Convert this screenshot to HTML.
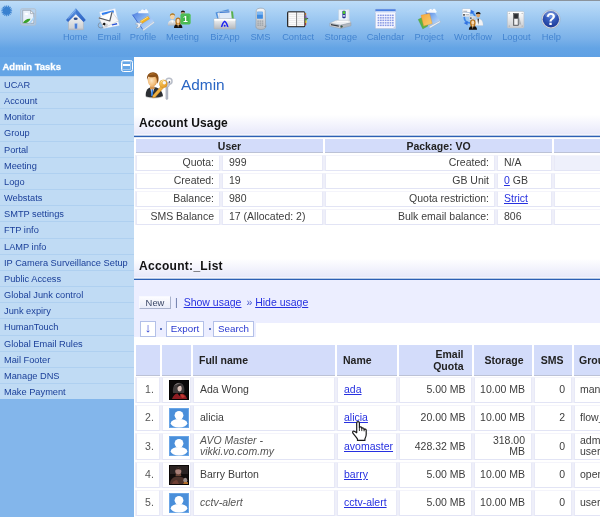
<!DOCTYPE html>
<html><head><meta charset="utf-8"><title>Admin</title>
<style>
html,body{margin:0;padding:0;}
body{will-change:transform;width:600px;height:517px;overflow:hidden;background:#fff;font-family:"Liberation Sans",Arial,sans-serif;position:relative;font-size:10.5px;color:#333;}
*{box-sizing:border-box;}
#hdr{position:absolute;left:0;top:0;width:600px;height:57px;background:linear-gradient(#bcdcf8 0px,#a7cff4 12px,#7ab1e9 38px,#64a4e5 47px,#5fa0e4 57px);border-top:1px solid #8a939c;}
.nav{position:absolute;top:31px;font-size:9.3px;color:#4384d0;text-align:center;width:60px;margin-left:-30px;white-space:nowrap;}
.ico{position:absolute;top:6px;width:26px;height:26px;margin-left:-13px;}
#side{position:absolute;left:0;top:57px;width:134px;height:460px;background:#83b6eb;}
#side h3{margin:0;height:19px;background:#64a5e6;color:#fff;font-size:9.5px;font-weight:bold;line-height:20px;padding-left:2.5px;position:relative;-webkit-text-stroke:0.3px #fff;}
#side a{position:absolute;left:0;width:134px;display:block;line-height:16.5px;font-size:9.25px;color:#1a3f99;background:#c0dbf4;border-top:1px solid #afd0f0;padding-left:4px;white-space:nowrap;text-decoration:none;}
.min{position:absolute;left:120.500px;top:2.500px;width:12px;height:12px;border:1.300px solid #fff;border-radius:2.500px;background:#64a5e6;}
.min i{position:absolute;left:0.800px;top:0.800px;right:0.800px;bottom:0.800px;border:1px solid rgba(255,255,255,.38);}
.min b{position:absolute;left:1.200px;top:3.500px;width:7.200px;height:2.400px;background:#fff;}
.sec{position:absolute;left:134px;width:466px;font-weight:bold;font-size:12px;color:#111;padding-left:5px;background:linear-gradient(#fff 0,#fff 25%,#e8e9fa 96%,#f4f4fd 96%,#f4f4fd 100%);letter-spacing:0.12px;}
a.l{color:#2630e0;text-decoration:underline;}
.c{position:absolute;background:#fff;border:1px solid;border-color:#f4f4fb #e8e9f7 #e2e4f5 #e8e9f7;box-shadow:1px 0 0 #eeeff9,-1px 0 0 #eeeff9;font-size:10.5px;color:#3d3d3d;white-space:nowrap;overflow:hidden;}
.h{position:absolute;background:#d3dcfa;border-bottom:1px solid #bcc2d6;font-size:10.5px;font-weight:bold;color:#222;white-space:nowrap;overflow:hidden;}
.r{text-align:right;}
.btn{position:absolute;border:1px solid #b3c0e8;background:#fff;color:#2838d0;font-size:9.8px;text-align:center;}
#title{position:absolute;left:181px;top:75px;font-size:15.4px;color:#2a66c4;line-height:20px;}
.bl{position:absolute;left:134px;width:466px;height:3px;background:linear-gradient(rgba(44,96,180,.35) 0,rgba(44,96,180,.35) 1px,#2c60b4 1px,#2c60b4 2px,rgba(44,96,180,.15) 2px);}
#band{position:absolute;left:134px;top:280px;width:466px;height:43px;background:#eceeff;}
#links{position:absolute;left:175px;top:295px;font-size:10.5px;line-height:14px;color:#446;white-space:nowrap;}
.dot{position:absolute;width:2px;height:2px;background:#2f4aa8;border-radius:1px;}
.av{position:absolute;left:6px;width:20px;height:20px;}
#band2{position:absolute;left:134px;top:323px;width:122px;height:14px;background:#eceeff;}
</style></head><body>
<div id="hdr">
<svg id="ics" width="600" height="57" viewBox="0 0 600 57" style="position:absolute;left:0;top:-1px">
<defs>
<linearGradient id="gRoof" x1="0" y1="0" x2="0" y2="1"><stop offset="0" stop-color="#6aa3ea"/><stop offset="1" stop-color="#2d63c4"/></linearGradient>
<linearGradient id="gWall" x1="0" y1="0" x2="0" y2="1"><stop offset="0" stop-color="#ffffff"/><stop offset="1" stop-color="#c9ccd0"/></linearGradient>
<linearGradient id="gBook" x1="0" y1="0" x2="1" y2="1"><stop offset="0" stop-color="#4474dc"/><stop offset="0.500" stop-color="#8ab6f1"/><stop offset="1" stop-color="#cfe4fb"/></linearGradient>
<linearGradient id="gSil" x1="0" y1="0" x2="0" y2="1"><stop offset="0" stop-color="#f6f7f8"/><stop offset="1" stop-color="#b4b8bd"/></linearGradient>
<radialGradient id="gHelp" cx="0.5" cy="0.3" r="0.8"><stop offset="0" stop-color="#4a78dc"/><stop offset="1" stop-color="#152f8c"/></radialGradient>
<linearGradient id="gOr" x1="0" y1="0" x2="1" y2="1"><stop offset="0" stop-color="#f6a63a"/><stop offset="1" stop-color="#f7cf72"/></linearGradient>
</defs>
<!-- sunburst -->
<g fill="#3b82d0"><circle cx="6.700" cy="10.800" r="3.900"/>
<g stroke="#3b82d0" stroke-width="1.100">
<line x1="1.300" y1="10.800" x2="12.100" y2="10.800"/><line x1="6.700" y1="5.400" x2="6.700" y2="16.200"/>
<line x1="2.900" y1="7" x2="10.500" y2="14.600"/><line x1="2.900" y1="14.600" x2="10.500" y2="7"/>
<line x1="1.700" y1="8.700" x2="11.700" y2="12.900"/><line x1="1.700" y1="12.900" x2="11.700" y2="8.700"/>
<line x1="4.600" y1="5.800" x2="8.800" y2="15.800"/><line x1="8.800" y1="5.800" x2="4.600" y2="15.800"/>
</g></g>
<!-- broken image -->
<rect x="20.700" y="8.800" width="15" height="16.300" rx="1.500" fill="#c3d6ea" fill-opacity="0.550" stroke="#b4c0cc" stroke-width="1"/>
<path d="M22.700 10.300h7.800l3.300 3.300v9.700h-11.100z" fill="#e9f1fb" stroke="#8d98a6" stroke-width="0.700"/>
<path d="M30.500 10.300v3.300h3.300z" fill="#f8f8f8" stroke="#8d98a6" stroke-width="0.600"/>
<path d="M23 23c1.200-3 4.500-4.800 7.500-4.200c-0.500 2-3 4.200-4.500 4.200z" fill="#3aa12a"/>
<path d="M34 16.500l-5.500 7h2l3.500-4.500z" fill="#a9d3f7"/>
<ellipse cx="26.500" cy="14" rx="2" ry="0.900" fill="#fff"/>
<!-- home -->
<g>
<path d="M68.500 19.500l7.300-7.500l7.600 7.500v10.100h-14.900z" fill="url(#gWall)" stroke="#a9adb3" stroke-width="0.500"/>
<path d="M75.800 8.300l9.900 11.800l-2.100 1.900l-7.800-7.800l-7.700 7.800l-2.100-1.900z" fill="url(#gRoof)"/>
<path d="M75.800 8.300l9.900 11.800l-2.100 1.900l-7.800-9.500z" fill="#2a5fc0" fill-opacity="0.450"/>
<path d="M75.800 9.600l-7.600 9" stroke="#9cc4f5" stroke-width="0.700" fill="none"/>
<rect x="74.300" y="23.200" width="3.200" height="6.300" fill="#4a7fd8" stroke="#d5def0" stroke-width="0.500"/>
<ellipse cx="75.700" cy="18.800" rx="2" ry="1.200" fill="#2c4a86"/>
<rect x="68.600" y="28.600" width="14.700" height="1" fill="#b9bcc2"/>
</g>
<!-- email -->
<g>
<path d="M99.500 12.100l15.700-3.500l4.100 16.900l-15.700 2.900z" fill="#fcfdff" stroke="#c3d2ea" stroke-width="0.400"/>
<path d="M101.600 12.900l11.900-2.600l0.500 2.300l-11.800 2.500z" fill="#2f7df0"/>
<path d="M111.700 24.300l5.300-1.200l0.300 1.300l-5.300 1.200z" fill="#2a55d8"/>
<circle cx="100.900" cy="25.300" r="2.700" fill="none" stroke="#7a838e" stroke-width="0.700"/>
<path d="M98.700 17.700l13.300-5.900l6.800 9l-15.100 7.300z" fill="#f6f6f7" stroke="#b4b8bf" stroke-width="0.500"/>
<path d="M98.900 17.800l10.900 3.200l2.200-8.900" fill="#fff" stroke="#5a5d63" stroke-width="1.200" stroke-linejoin="round"/>
<path d="M102.300 24.300l1.800-1.700l1.600 1.100l-0.600 2z" fill="#0c0c0c"/>
<path d="M104 26.500l2.500-3l1.500 0.500l-1 3.500z" fill="#c9ccd1"/>
</g>
<!-- profile -->
<g>
<path d="M132.400 14.700l12.700-5.500l8.700 12.200l-11 8.100z" fill="url(#gBook)"/>
<path d="M132.400 14.700l10.400 14.800" stroke="#3a66d0" stroke-width="0.900"/>
<path d="M142.800 29.500l11-8.100l0.600 1.300l-10.900 8z" fill="#e4e9f0" stroke="#aab6c6" stroke-width="0.300"/>
<path d="M138.300 13.200c-0.400-1.500 1-2.600 2.300-2c0.300-1.700 2.600-2.300 3.600-0.900c0.800-1.500 3.200-1.200 3.400 0.600c1.300 0.400 1 2.300-0.300 2.400z" fill="#fff" fill-opacity="0.920"/>
<path d="M140 21.300l8-5l1.500 2.500l-8 5z" fill="#f5b41c" stroke="#d98c10" stroke-width="0.400"/>
<path d="M140.600 21.500l7.600-4.700" stroke="#fdeaa0" stroke-width="0.800"/>
<path d="M141 22.300l-1.300 1c-1.200-0.900-3.200-0.600-4.300 0.700l2.300 0.700l0.300 1.700l-2 1.300c1.400 0.800 3.300 0.300 4.100-1.100c0.400-0.700 0.500-1.400 0.400-2l1.700-1.100z" fill="#f2f4f7" stroke="#9099a5" stroke-width="0.500"/>
</g>
<!-- meeting -->
<g>
<circle cx="182.900" cy="12.800" r="1.900" fill="#c49a70"/><path d="M180.800 12.600c0-2.900 4.300-2.900 4.300 0c-1.100-0.800-3.200-0.800-4.300 0z" fill="#1a120c"/>
<path d="M167.800 25.600c0-3.800 1.600-5.300 4.300-5.300s4.300 1.500 4.300 5.300z" fill="url(#gSil)"/>
<path d="M171.400 20.400l0.900 2.800l0.900-2.800z" fill="#fff"/>
<ellipse cx="172.300" cy="16.500" rx="2.200" ry="2.900" fill="#f6d3a4"/>
<path d="M169.900 16.400c-0.600-4 5.600-4.500 5.200-0.300c-0.900-1.400-3.800-2-5.200 0.300z" fill="#a9741c"/>
<path d="M174 28c0-3 1.800-4.300 4.200-4.300s4.200 1.300 4.200 4.300z" fill="#15110e"/>
<path d="M175.400 20.800c0-4.300 5.400-4.300 5.400 0c0 1.800-0.400 3.300-0.700 4.100h-4c-0.300-0.800-0.700-2.300-0.700-4.100z" fill="#b4721c"/>
<ellipse cx="178.100" cy="21" rx="1.600" ry="2.300" fill="#f8dcb8"/>
<path d="M177.200 23.600l0.900 3.800l0.900-3.800z" fill="#f3d3a8"/>
<rect x="180.700" y="13.700" width="9.700" height="10.600" rx="1.500" fill="#3fb548" stroke="#58c45e" stroke-width="0.500"/>
<rect x="182" y="15" width="7.100" height="8" fill="none" stroke="#7ad07e" stroke-width="0.400"/>
<text x="185.300" y="22.300" style="font-family:'Liberation Sans',sans-serif;font-size:8.600px;font-weight:bold" fill="#fff" text-anchor="middle">1</text>
</g>
<!-- bizapp -->
<g>
<path d="M215.500 12.500l13-3.300l2 7l-13 3.300z" fill="#4d8fdd"/>
<path d="M217.500 13l13.500-2.500l1.500 7l-13.500 2.500z" fill="#f4f7fb" stroke="#b9c6d6" stroke-width="0.400"/>
<path d="M219 11.800l13.500-0.800l0.800 7.500l-13.500 0.800z" fill="#dfeaf8" stroke="#9fb3cc" stroke-width="0.400"/>
<path d="M231 11.200l2 0.200l0.800 7.500l-2-0.200z" fill="#58b04d"/>
<path d="M219.500 12.500l10-0.600" stroke="#3a78d0" stroke-width="1.200"/>
<rect x="214" y="18.700" width="21.700" height="10.300" rx="0.800" fill="url(#gSil)" stroke="#aab2ba" stroke-width="0.500"/>
<rect x="214.300" y="19" width="21.100" height="1.600" fill="#fff"/>
<path d="M220.800 27.200c0.700-3.400 2-5.800 3.900-6.800c1.900 1 3.200 3.400 3.900 6.800l-1.700-0.400c-0.400-1.900-1.100-3.500-2.200-4.500c-1.100 1-1.800 2.600-2.200 4.500z" fill="#1c22f2"/>
<circle cx="224.700" cy="25.700" r="1" fill="#1c22f2"/>
</g>
<!-- sms -->
<g>
<path d="M256.300 10.500c0-1.600 2.400-2.300 4.600-2.300s4 0.700 4.200 2.300l0.600 16.300c0 1.800-2.200 2.700-4.800 2.700s-5-0.900-5-2.700z" fill="url(#gSil)" stroke="#8f979f" stroke-width="0.600"/>
<rect x="257" y="11.800" width="5.900" height="7" rx="0.500" fill="#3f8be0"/>
<rect x="257" y="11.800" width="5.900" height="3" rx="0.500" fill="#7db7f2"/>
<g fill="#8d949b"><rect x="257.300" y="20.600" width="1.600" height="1"/><rect x="259.500" y="20.600" width="1.600" height="1"/><rect x="261.700" y="20.600" width="1.600" height="1"/><rect x="257.300" y="22.600" width="1.600" height="1"/><rect x="259.500" y="22.600" width="1.600" height="1"/><rect x="261.700" y="22.600" width="1.600" height="1"/><rect x="257.300" y="24.600" width="1.600" height="1"/><rect x="259.500" y="24.600" width="1.600" height="1"/><rect x="261.700" y="24.600" width="1.600" height="1"/></g>
<path d="M264.500 26.500l1.800-0.500" stroke="#7d858d" stroke-width="0.800"/>
</g>
<!-- contact -->
<g>
<path d="M304 13h2.200v2.500h-2.200z" fill="#f08a2a"/><path d="M304 15.500h2.600v2.500h-2.600z" fill="#a06ad0"/><path d="M304 18h2.900v2.500h-2.900z" fill="#55b848"/><path d="M304 20.500h2.600v2.500h-2.600z" fill="#f0d22a"/><path d="M304 23h2.200v2.300h-2.200z" fill="#e0413a"/>
<path d="M306.500 17.500l2 1l-2 1z" fill="#444"/>
<rect x="287" y="11.200" width="18.300" height="16" rx="1.500" fill="#2b2b2d"/>
<path d="M288.300 12.400h8v13.700h-8z" fill="#fbfbfb"/><path d="M296.900 12.400h7.400v13.700h-7.400z" fill="#f4f4f4"/>
<path d="M296.600 12.400v13.700" stroke="#9a9a9a" stroke-width="0.700"/>
<g stroke="#d7d7da" stroke-width="0.400"><path d="M289 14.500h6.800M289 16.500h6.800M289 18.500h6.800M289 20.500h6.800M289 22.500h6.800M289 24.500h6.800M297.500 14.500h6.300M297.500 16.500h6.300M297.500 18.500h6.300M297.500 20.500h6.300M297.500 22.500h6.300M297.500 24.500h6.300"/></g>
</g>
<!-- storage -->
<g>
<path d="M338.600 9.600h10.600v11.200h-10.600z" fill="#fff" fill-opacity="0.780" stroke="#c3cad3" stroke-width="0.400"/>
<path d="M347.400 9.600h1.800v11.200h-1.800z" fill="#dfe3e8" fill-opacity="0.800"/>
<rect x="342.400" y="10.800" width="3.200" height="7.400" rx="0.800" fill="#2a3590"/>
<ellipse cx="344" cy="12.500" rx="1.300" ry="1.600" fill="#4fd02a"/>
<ellipse cx="344" cy="15.800" rx="1.200" ry="0.900" fill="#dfe6fa"/>
<path d="M336 20.300h13.500l1.500 2.500l-10.500 2.400l-10.700-2z" fill="#eceef1" stroke="#a7adb5" stroke-width="0.400"/>
<path d="M337 21.300h11" stroke="#fff" stroke-width="0.900"/>
<path d="M329.800 23.200l10.700 2v3.400l-10.700-2.400z" fill="#c9cdd3" stroke="#8f959d" stroke-width="0.400"/>
<path d="M331 24.100l7.800 1.500v1.200l-7.800-1.600z" fill="#3a3d42"/>
<path d="M340.500 25.200l10.500-2.400v3l-10.500 2.800z" fill="#b2b7be" stroke="#8f959d" stroke-width="0.400"/>
<circle cx="341.600" cy="26.600" r="1" fill="#222"/><circle cx="341.600" cy="26.600" r="0.450" fill="#3d6"/>
</g>
<!-- calendar -->
<g>
<rect x="375.400" y="9.200" width="20.200" height="19.400" rx="0.800" fill="#f6f7ff" stroke="#b4bfd8" stroke-width="0.600"/>
<rect x="375.400" y="9.200" width="20.200" height="2.300" fill="#4a7fe0"/>
<rect x="375.400" y="11.500" width="20.200" height="1.500" fill="#dfe8fa"/>
<g fill="#8a9be4"><rect x="377.6" y="14.6" width="1.700" height="1.500"/><rect x="380.0" y="14.6" width="1.700" height="1.500"/><rect x="382.4" y="14.6" width="1.700" height="1.500"/><rect x="384.8" y="14.6" width="1.700" height="1.500"/><rect x="387.2" y="14.6" width="1.700" height="1.500"/><rect x="389.6" y="14.6" width="1.700" height="1.500"/><rect x="392.0" y="14.6" width="1.700" height="1.500"/><rect x="377.6" y="17.1" width="1.700" height="1.500"/><rect x="380.0" y="17.1" width="1.700" height="1.500"/><rect x="382.4" y="17.1" width="1.700" height="1.500"/><rect x="384.8" y="17.1" width="1.700" height="1.500"/><rect x="387.2" y="17.1" width="1.700" height="1.500"/><rect x="389.6" y="17.1" width="1.700" height="1.500"/><rect x="392.0" y="17.1" width="1.700" height="1.500"/><rect x="377.6" y="19.6" width="1.700" height="1.500"/><rect x="380.0" y="19.6" width="1.700" height="1.500"/><rect x="382.4" y="19.6" width="1.700" height="1.500"/><rect x="384.8" y="19.6" width="1.700" height="1.500"/><rect x="387.2" y="19.6" width="1.700" height="1.500"/><rect x="389.6" y="19.6" width="1.700" height="1.500"/><rect x="392.0" y="19.6" width="1.700" height="1.500"/><rect x="377.6" y="22.1" width="1.700" height="1.500"/><rect x="380.0" y="22.1" width="1.700" height="1.500"/><rect x="382.4" y="22.1" width="1.700" height="1.500"/><rect x="384.8" y="22.1" width="1.700" height="1.500"/><rect x="387.2" y="22.1" width="1.700" height="1.500"/><rect x="389.6" y="22.1" width="1.700" height="1.500"/><rect x="392.0" y="22.1" width="1.700" height="1.500"/><rect x="377.6" y="24.6" width="1.700" height="1.500"/><rect x="380.0" y="24.6" width="1.700" height="1.500"/><rect x="382.4" y="24.6" width="1.700" height="1.500"/><rect x="384.8" y="24.6" width="1.700" height="1.500"/><rect x="387.2" y="24.6" width="1.700" height="1.500"/><rect x="389.6" y="24.6" width="1.700" height="1.500"/><rect x="392.0" y="24.6" width="1.700" height="1.500"/></g>
<path d="M392.500 28.600l3.100-3.100v3.100z" fill="#c9d3ea"/>
</g>
<!-- project -->
<g>
<path d="M418.300 19.500l5-2.500l4.500 9l-5 2.800z" fill="#5db346" stroke="#3f9330" stroke-width="0.400"/>
<path d="M425.500 12.600l7-3.400l7.500 11.500l-11 6z" fill="url(#gBook)"/>
<path d="M429 26.700l11-6l0.600 1.400l-10.800 6.200z" fill="#eef1f5" stroke="#9aa7b8" stroke-width="0.400"/>
<path d="M426.500 12.700c-0.400-1.500 1-2.600 2.300-2c0.300-1.700 2.600-2.300 3.600-0.900c0.800-1.500 3.200-1.200 3.400 0.600c1.300 0.400 1 2.300-0.300 2.400z" fill="#fff" fill-opacity="0.920"/>
<path d="M421 15.300l8.500-1.900l2.700 10.200l-8.500 2.500z" fill="url(#gOr)" stroke="#e0902a" stroke-width="0.400"/>
</g>
<!-- workflow -->
<g>
<circle cx="469.700" cy="17.500" r="5.400" fill="none" stroke="#3f86e6" stroke-width="1.700"/>
<path d="M470.500 9.500l4.200 2.400l-4.200 2z" fill="#2f6fe0"/><path d="M467.500 25.300l-3.800-2.400l4-1.700z" fill="#2f6fe0"/>
<rect x="462.400" y="8.900" width="8" height="3.600" fill="#fdfdfd" stroke="#b3bcc8" stroke-width="0.300"/><rect x="463.200" y="10.800" width="4" height="0.800" fill="#8d96a3"/>
<rect x="462.400" y="12.800" width="7.400" height="3.800" fill="#fdfdfd" stroke="#b3bcc8" stroke-width="0.300"/><rect x="463" y="14.200" width="2" height="1.400" fill="#444"/><rect x="465.500" y="14.400" width="3.500" height="0.900" fill="#8d96a3"/>
<rect x="469.300" y="16.300" width="6.400" height="3.400" fill="#fdfdfd" stroke="#b3bcc8" stroke-width="0.300"/><rect x="469.900" y="17.400" width="1.800" height="1.400" fill="#444"/><rect x="472.300" y="17.600" width="2.800" height="0.900" fill="#8d96a3"/>
<path d="M474.500 25.500c0-4.800 1.300-6.600 4-6.600s4.600 1.800 4.600 6.600z" fill="#f1f2f4" stroke="#c0c5cc" stroke-width="0.300"/>
<path d="M477.500 18.800l0.700 6l0.800-6z" fill="#1e1e22"/>
<ellipse cx="478.200" cy="15" rx="2" ry="2.400" fill="#dba46a"/>
<path d="M475.900 14.300c-0.200-3.200 4.900-3.200 4.700 0c-1.100-0.900-3.600-0.900-4.700 0z" fill="#17120e"/>
<path d="M468.800 29.700c0-2.800 1.700-4 4.100-4s4.100 1.200 4.100 4z" fill="#110e0c"/>
<path d="M470 22.500c0-4.200 5.600-4.200 5.600 0c0 1.800-0.400 3.200-0.800 4h-4c-0.400-0.800-0.800-2.200-0.800-4z" fill="#b8741c"/>
<ellipse cx="472.800" cy="22.700" rx="1.500" ry="2.100" fill="#f6d9b4"/>
<path d="M472 25l0.800 4.200l0.800-4.200z" fill="#f3d3a8"/>
</g>
<!-- logout -->
<g>
<rect x="507.400" y="11.400" width="16.500" height="16.500" rx="1" fill="url(#gWall)" stroke="#b9bec5" stroke-width="0.600"/>
<rect x="508" y="12" width="15.300" height="1.200" fill="#fff"/>
<circle cx="509.200" cy="13.200" r="0.500" fill="#888"/><circle cx="522.100" cy="13.200" r="0.500" fill="#888"/><circle cx="509.200" cy="26.100" r="0.500" fill="#888"/><circle cx="522.100" cy="26.100" r="0.500" fill="#888"/>
<rect x="513.500" y="13.500" width="5" height="11.800" fill="#55585d" stroke="#3a3c40" stroke-width="0.500"/>
<rect x="514.200" y="18.500" width="3.600" height="6.300" fill="#f2f2f3"/>
<rect x="514.200" y="14.200" width="3.600" height="4.300" fill="#2d2f33"/>
<path d="M518.500 15l2.800 9.500h-2.800z" fill="#9da2a8" fill-opacity="0.700"/>
</g>
<!-- help -->
<g>
<circle cx="550.900" cy="19.200" r="9.300" fill="#d9dee6" stroke="#9aa3b0" stroke-width="0.500"/>
<circle cx="550.900" cy="19.200" r="8.200" fill="url(#gHelp)"/>
<ellipse cx="550.900" cy="14.500" rx="6" ry="3.600" fill="#fff" fill-opacity="0.180"/>
<text x="550.900" y="25" font-family="Liberation Sans, sans-serif" font-size="16" font-weight="bold" fill="#fff" text-anchor="middle">?</text>
</g>
</svg>
<div class="nav" style="left:75.3px">Home</div>
<div class="nav" style="left:109.2px">Email</div>
<div class="nav" style="left:143px">Profile</div>
<div class="nav" style="left:182.5px">Meeting</div>
<div class="nav" style="left:225px">BizApp</div>
<div class="nav" style="left:260.5px">SMS</div>
<div class="nav" style="left:298.2px">Contact</div>
<div class="nav" style="left:340.8px">Storage</div>
<div class="nav" style="left:385.5px">Calendar</div>
<div class="nav" style="left:429px">Project</div>
<div class="nav" style="left:473px">Workflow</div>
<div class="nav" style="left:516.4px">Logout</div>
<div class="nav" style="left:551.4px">Help</div>
</div>
<div id="side"><h3>Admin Tasks<span class="min"><i></i><b></b></span></h3>
<a style="top:19px;height:16px">UCAR</a><a style="top:35px;height:16px">Account</a><a style="top:51px;height:16px">Monitor</a><a style="top:67px;height:17px">Group</a><a style="top:84px;height:16px">Portal</a><a style="top:100px;height:16px">Meeting</a><a style="top:116px;height:16px">Logo</a><a style="top:132px;height:16px">Webstats</a><a style="top:148px;height:16px">SMTP settings</a><a style="top:164px;height:17px">FTP info</a><a style="top:181px;height:16px">LAMP info</a><a style="top:197px;height:16px">IP Camera Surveillance Setup</a><a style="top:213px;height:16px">Public Access</a><a style="top:229px;height:16px">Global Junk control</a><a style="top:245px;height:16px">Junk expiry</a><a style="top:261px;height:17px">HumanTouch</a><a style="top:278px;height:16px">Global Email Rules</a><a style="top:294px;height:16px">Mail Footer</a><a style="top:310px;height:16px">Manage DNS</a><a style="top:326px;height:16px">Make Payment</a>
</div>
<div id="title">Admin</div>
<div class="sec" style="top:108px;height:27px;line-height:30px">Account Usage</div><div class="bl" style="top:135px"></div>
<div class="h" style="left:136px;top:139px;width:187px;height:14px;line-height:14px;text-align:center;">User</div>
<div class="h" style="left:325px;top:139px;width:227px;height:14px;line-height:14px;text-align:center;">Package: VO</div>
<div class="h" style="left:554px;top:139px;width:46px;height:14px;line-height:14px;"></div>
<div class="c r" style="left:136px;top:155px;width:84px;height:16px;line-height:13px;padding-right:5px;">Quota:</div>
<div class="c" style="left:222px;top:155px;width:101px;height:16px;line-height:13px;padding-left:6px;">999</div>
<div class="c r" style="left:325px;top:155px;width:170px;height:16px;line-height:13px;padding-right:5px;">Created:</div>
<div class="c" style="left:497px;top:155px;width:55px;height:16px;line-height:13px;padding-left:6px;">N/A</div>
<div class="c" style="left:554px;top:155px;width:56px;height:16px;line-height:13px;background:#eef0fb;"></div>
<div class="c r" style="left:136px;top:173px;width:84px;height:16px;line-height:13px;padding-right:5px;">Created:</div>
<div class="c" style="left:222px;top:173px;width:101px;height:16px;line-height:13px;padding-left:6px;">19</div>
<div class="c r" style="left:325px;top:173px;width:170px;height:16px;line-height:13px;padding-right:5px;">GB Unit</div>
<div class="c" style="left:497px;top:173px;width:55px;height:16px;line-height:13px;padding-left:6px;"><a class="l">0</a> GB</div>
<div class="c" style="left:554px;top:173px;width:56px;height:16px;line-height:13px;"></div>
<div class="c r" style="left:136px;top:191px;width:84px;height:16px;line-height:13px;padding-right:5px;">Balance:</div>
<div class="c" style="left:222px;top:191px;width:101px;height:16px;line-height:13px;padding-left:6px;">980</div>
<div class="c r" style="left:325px;top:191px;width:170px;height:16px;line-height:13px;padding-right:5px;">Quota restriction:</div>
<div class="c" style="left:497px;top:191px;width:55px;height:16px;line-height:13px;padding-left:6px;"><a class="l">Strict</a></div>
<div class="c" style="left:554px;top:191px;width:56px;height:16px;line-height:13px;"></div>
<div class="c r" style="left:136px;top:209px;width:84px;height:16px;line-height:13px;padding-right:5px;">SMS Balance</div>
<div class="c" style="left:222px;top:209px;width:101px;height:16px;line-height:13px;padding-left:6px;">17 (Allocated: 2)</div>
<div class="c r" style="left:325px;top:209px;width:170px;height:16px;line-height:13px;padding-right:5px;">Bulk email balance:</div>
<div class="c" style="left:497px;top:209px;width:55px;height:16px;line-height:13px;padding-left:6px;">806</div>
<div class="c" style="left:554px;top:209px;width:56px;height:16px;line-height:13px;"></div>
<div class="sec" style="top:252px;height:26px;line-height:29px;letter-spacing:.3px">Account:_List</div><div class="bl" style="top:278px"></div>
<div id="band"></div>
<div class="btn" style="left:139px;top:296px;width:32px;height:13px;line-height:12px;font-size:9.4px;color:#3a4766;border-color:#f8f9ff #a9b2cc #a9b2cc #f8f9ff;background:linear-gradient(#fdfdff,#e9ecfa)">New</div>
<div id="links"><span style="color:#5f6fa0">|</span> <a class="l" style="margin-left:3px">Show usage</a> <span style="color:#4455cc;margin-left:2px">»</span> <a class="l">Hide usage</a></div>
<div id="band2"></div>
<div class="btn" style="left:140px;top:321px;width:16px;height:16px;line-height:12px;font-size:13px">↓</div>
<div class="dot" style="left:160px;top:328px"></div>
<div class="btn" style="left:166px;top:321px;width:38px;height:16px;line-height:14px">Export</div>
<div class="dot" style="left:208.500px;top:328px"></div>
<div class="btn" style="left:213px;top:321px;width:41px;height:16px;line-height:14px">Search</div>
<div class="h" style="left:136px;top:345px;width:24px;height:31px;line-height:31px;text-align:right;padding-right:8.5px;line-height:30px;"></div>
<div class="h" style="left:162px;top:345px;width:29px;height:31px;line-height:31px;text-align:right;padding-right:8.5px;line-height:30px;"></div>
<div class="h" style="left:193px;top:345px;width:142px;height:31px;line-height:31px;padding-left:6px;line-height:30px;">Full name</div>
<div class="h" style="left:337px;top:345px;width:60px;height:31px;line-height:31px;padding-left:6px;line-height:30px;">Name</div>
<div class="h" style="left:399px;top:345px;width:73px;height:31px;line-height:12px;padding-top:3px;text-align:right;padding-right:8.5px;">Email<br>Quota</div>
<div class="h" style="left:474px;top:345px;width:58px;height:31px;line-height:31px;text-align:right;padding-right:8.5px;line-height:30px;">Storage</div>
<div class="h" style="left:534px;top:345px;width:38px;height:31px;line-height:31px;text-align:right;padding-right:8.5px;line-height:30px;">SMS</div>
<div class="h" style="left:574px;top:345px;width:66px;height:31px;line-height:31px;padding-left:5px;line-height:30px;">Group</div>
<div class="c" style="left:136px;top:377px;width:24px;height:26px;line-height:23px;text-align:center;padding-left:3px;color:#555;">1.</div>
<div class="c" style="left:162px;top:377px;width:29px;height:26px"><svg class="av" style="top:2px" viewBox="0 0 20 20"><defs><filter id="bl1" x="-10%" y="-10%" width="120%" height="120%"><feGaussianBlur stdDeviation="0.600"/></filter></defs><rect width="20" height="20" fill="#0b0909"/><g filter="url(#bl1)"><path d="M4 13c-1-7 2.500-10.500 6.500-10.200c3.800 0.300 5.500 4.200 4.700 10.200z" fill="#3f3a3a"/><path d="M5 6c1.500-2.500 4-3.500 6.500-3c-2 0.500-4.500 1.500-6.500 3z" fill="#8a8484"/><ellipse cx="10.600" cy="8.600" rx="2.100" ry="3" fill="#dcc3ba"/><path d="M8 7.500c0.500-2.500 2.500-3.500 4.500-2.500c-1.500 0.500-3 1.200-4.500 2.500z" fill="#241f1f"/><path d="M3 19c1-3.500 3.500-5.500 5.500-5.500l2 2.500l2.500-2.500c2.500 0.500 4.500 2.500 5 5.500z" fill="#8f1f22"/><path d="M11 14c2 0 4 1 5 3l-3 1z" fill="#c43a32"/></g><rect x="0.500" y="0.500" width="19" height="19" fill="none" stroke="#050404" stroke-width="1"/></svg></div>
<div class="c" style="left:193px;top:377px;width:142px;height:26px;line-height:23px;padding-left:6px;">Ada Wong</div>
<div class="c" style="left:337px;top:377px;width:60px;height:26px;line-height:23px;padding-left:6px;"><a class="l">ada</a></div>
<div class="c r" style="left:399px;top:377px;width:73px;height:26px;line-height:23px;padding-right:5.5px;">5.00 MB</div>
<div class="c r" style="left:474px;top:377px;width:58px;height:26px;line-height:23px;padding-right:6px;">10.00 MB</div>
<div class="c r" style="left:534px;top:377px;width:38px;height:26px;line-height:23px;padding-right:6px;">0</div>
<div class="c" style="left:574px;top:377px;width:66px;height:26px;line-height:23px;padding-left:5px;">man</div>
<div class="c" style="left:136px;top:405px;width:24px;height:26px;line-height:23px;text-align:center;padding-left:3px;color:#555;">2.</div>
<div class="c" style="left:162px;top:405px;width:29px;height:26px"><svg class="av" style="top:2px" viewBox="0 0 20 20"><rect width="20" height="20" fill="#4a8fda"/><rect x="0.500" y="0.500" width="19" height="19" fill="none" stroke="#6aa5e6" stroke-width="1"/><ellipse cx="10" cy="15.300" rx="8.300" ry="4.200" fill="#fff"/><circle cx="10" cy="7.300" r="4.400" fill="#fff"/></svg></div>
<div class="c" style="left:193px;top:405px;width:142px;height:26px;line-height:23px;padding-left:6px;">alicia</div>
<div class="c" style="left:337px;top:405px;width:60px;height:26px;line-height:23px;padding-left:6px;"><a class="l">alicia</a></div>
<div class="c r" style="left:399px;top:405px;width:73px;height:26px;line-height:23px;padding-right:5.5px;">20.00 MB</div>
<div class="c r" style="left:474px;top:405px;width:58px;height:26px;line-height:23px;padding-right:6px;">10.00 MB</div>
<div class="c r" style="left:534px;top:405px;width:38px;height:26px;line-height:23px;padding-right:6px;">2</div>
<div class="c" style="left:574px;top:405px;width:66px;height:26px;line-height:23px;padding-left:5px;">flow_</div>
<div class="c" style="left:136px;top:433px;width:24px;height:27px;line-height:24px;text-align:center;padding-left:3px;color:#555;">3.</div>
<div class="c" style="left:162px;top:433px;width:29px;height:27px"><svg class="av" style="top:2px" viewBox="0 0 20 20"><rect width="20" height="20" fill="#4a8fda"/><rect x="0.500" y="0.500" width="19" height="19" fill="none" stroke="#6aa5e6" stroke-width="1"/><ellipse cx="10" cy="15.300" rx="8.300" ry="4.200" fill="#fff"/><circle cx="10" cy="7.300" r="4.400" fill="#fff"/></svg></div>
<div class="c" style="left:193px;top:433px;width:142px;height:27px;line-height:11px;padding-top:1px;padding-left:6px;font-style:italic;color:#555;">AVO Master -<br>vikki.vo.com.my</div>
<div class="c" style="left:337px;top:433px;width:60px;height:27px;line-height:24px;padding-left:6px;"><a class="l">avomaster</a></div>
<div class="c r" style="left:399px;top:433px;width:73px;height:27px;line-height:24px;padding-right:5.5px;">428.32 MB</div>
<div class="c r" style="left:474px;top:433px;width:58px;height:27px;line-height:11px;padding-top:1px;padding-right:6px">318.00<br>MB</div>
<div class="c r" style="left:534px;top:433px;width:38px;height:27px;line-height:24px;padding-right:6px;">0</div>
<div class="c" style="left:574px;top:433px;width:66px;height:27px;line-height:11px;padding-top:1px;padding-left:5px">adm<br>user</div>
<div class="c" style="left:136px;top:462px;width:24px;height:26px;line-height:23px;text-align:center;padding-left:3px;color:#555;">4.</div>
<div class="c" style="left:162px;top:462px;width:29px;height:26px"><svg class="av" style="top:2px" viewBox="0 0 20 20"><defs><filter id="bl2" x="-10%" y="-10%" width="120%" height="120%"><feGaussianBlur stdDeviation="0.700"/></filter></defs><rect width="20" height="20" fill="#120d0c"/><g filter="url(#bl2)"><rect x="1" y="1" width="18" height="8" fill="#2b2321"/><ellipse cx="9.300" cy="6.300" rx="3" ry="3.500" fill="#a98078"/><path d="M6 5c0.300-3 6-3 6.500 0c-2-1-4.500-1-6.500 0z" fill="#30231f"/><path d="M7 8c1 2.300 3.800 2.300 4.800 0l0.500 3h-5.800z" fill="#6e4639"/><path d="M1 19c0-5 3.500-7.500 8-7.500s8.500 2.500 10 7.500z" fill="#4d302b"/><path d="M3 19c1-3 3-4 5-4l2 4z" fill="#6f4034"/><ellipse cx="16.300" cy="15.300" rx="2" ry="2.500" fill="#9a8c88"/><path d="M14 19l1.500-2.300l3.500 0.500v1.800z" fill="#b5702a"/></g><rect x="0.500" y="0.500" width="19" height="19" fill="none" stroke="#0a0707" stroke-width="1"/></svg></div>
<div class="c" style="left:193px;top:462px;width:142px;height:26px;line-height:23px;padding-left:6px;">Barry Burton</div>
<div class="c" style="left:337px;top:462px;width:60px;height:26px;line-height:23px;padding-left:6px;"><a class="l">barry</a></div>
<div class="c r" style="left:399px;top:462px;width:73px;height:26px;line-height:23px;padding-right:5.5px;">5.00 MB</div>
<div class="c r" style="left:474px;top:462px;width:58px;height:26px;line-height:23px;padding-right:6px;">10.00 MB</div>
<div class="c r" style="left:534px;top:462px;width:38px;height:26px;line-height:23px;padding-right:6px;">0</div>
<div class="c" style="left:574px;top:462px;width:66px;height:26px;line-height:23px;padding-left:5px;">oper</div>
<div class="c" style="left:136px;top:490px;width:24px;height:26px;line-height:23px;text-align:center;padding-left:3px;color:#555;">5.</div>
<div class="c" style="left:162px;top:490px;width:29px;height:26px"><svg class="av" style="top:2px" viewBox="0 0 20 20"><rect width="20" height="20" fill="#4a8fda"/><rect x="0.500" y="0.500" width="19" height="19" fill="none" stroke="#6aa5e6" stroke-width="1"/><ellipse cx="10" cy="15.300" rx="8.300" ry="4.200" fill="#fff"/><circle cx="10" cy="7.300" r="4.400" fill="#fff"/></svg></div>
<div class="c" style="left:193px;top:490px;width:142px;height:26px;line-height:23px;padding-left:6px;font-style:italic;color:#555;">cctv-alert</div>
<div class="c" style="left:337px;top:490px;width:60px;height:26px;line-height:23px;padding-left:6px;"><a class="l">cctv-alert</a></div>
<div class="c r" style="left:399px;top:490px;width:73px;height:26px;line-height:23px;padding-right:5.5px;">5.00 MB</div>
<div class="c r" style="left:474px;top:490px;width:58px;height:26px;line-height:23px;padding-right:6px;">10.00 MB</div>
<div class="c r" style="left:534px;top:490px;width:38px;height:26px;line-height:23px;padding-right:6px;">0</div>
<div class="c" style="left:574px;top:490px;width:66px;height:26px;line-height:23px;padding-left:5px;">user</div>
<svg width="40" height="40" viewBox="140 66 40 40" style="position:absolute;left:140px;top:66px">
<defs><radialGradient id="gFace" cx="0.4" cy="0.5" r="0.7"><stop offset="0" stop-color="#fde6c4"/><stop offset="0.6" stop-color="#f3bd7a"/><stop offset="1" stop-color="#c9823a"/></radialGradient>
<linearGradient id="gKey" x1="0" y1="0" x2="1" y2="1"><stop offset="0" stop-color="#fbd36a"/><stop offset="1" stop-color="#e0901c"/></linearGradient></defs>
<ellipse cx="154" cy="97" rx="8" ry="1.400" fill="#000" fill-opacity="0.180"/>
<path d="M145.800 96.500c-0.600-5.800 2-9.500 7-9.500s9.600 3 10.200 9.200c-5 1.600-12 1.600-17.200 0.300z" fill="#2c2f33"/>
<path d="M150.300 87.500l1.500 8.800l2.700-8.800z" fill="#f3f5f8"/>
<path d="M150.900 88.300l0.800 0.800l-0.700 6.500l0.900 1l1-1l0.200-6.500l0.800-0.800z" fill="#2f7de0"/>
<path d="M150 86.200h4.500v2.600c-1.300 1-3.200 1-4.500 0z" fill="#d9964e"/>
<ellipse cx="152.500" cy="80.600" rx="4.700" ry="5.800" fill="url(#gFace)"/>
<path d="M147.200 80.200c-1.200-5.500 2.500-8.200 6-8c3.600 0.200 6.200 3 5.200 8.600c-0.500 1.800-1 2.600-1.400 3c0.400-3-0.200-5.500-1.600-7c-2 0.800-5 0.600-6.600-0.400c-0.900 1-1.500 2.400-1.600 3.800z" fill="#8a4f16"/>
<path d="M149 75.200c1.600-2 5-2.300 7-0.600c-2-0.600-5-0.400-7 0.600z" fill="#c07a2c"/>
<g fill="none" stroke="#b9bec9" stroke-width="1.500"><circle cx="169" cy="81.200" r="3"/></g>
<path d="M165.800 86.500h2.200v12l-1.100 1.400l-1.100-1.400z" fill="#b4b9c6" stroke="#8f95a6" stroke-width="0.300"/>
<circle cx="167" cy="84.500" r="2.600" fill="#c5c9d4" stroke="#9aa0b0" stroke-width="0.400"/>
<circle cx="169.500" cy="82" r="0.800" fill="#20264a"/>
<path d="M152.800 95.600l8.600-9.800l2.200 1.900l-8.600 9.800l-2.400 0.300z" fill="url(#gKey)" stroke="#c47a12" stroke-width="0.400"/>
<circle cx="163.300" cy="83.800" r="3.900" fill="url(#gKey)" stroke="#d08a18" stroke-width="0.500"/>
<circle cx="164.300" cy="82.700" r="1.700" fill="#f4f6fb"/>
<path d="M160.800 82.300c0.600-1.400 2-2.300 3.400-2.300" stroke="#fff0b8" stroke-width="0.800" fill="none"/>
</svg>
<svg width="20" height="24" viewBox="0 0 20 24" style="position:absolute;left:350px;top:419px">
<path d="M6.700 13.800L6.700 3.900c0-1.700 2.700-1.700 2.700 0L9.400 8.600c0.500-1.100 2.300-1 2.400 0.300v0.700c0.500-1 2.200-0.800 2.300 0.400v0.700c0.500-0.900 2.100-0.700 2.100 0.600L16.200 15.400c0 2-0.800 3-1.300 4.600v1.400h-7.400v-1.300c-1-1.800-3-3.600-4.600-6c-1-1.500 0.700-2.700 1.900-1.500z" fill="#fff" stroke="#1a1a1a" stroke-width="1.200" stroke-linejoin="round"/>
<path d="M9.400 8.600v3.400M11.800 9.500v2.600M14.100 10.300v2" stroke="#1a1a1a" stroke-width="0.900"/>
</svg>
</body></html>
